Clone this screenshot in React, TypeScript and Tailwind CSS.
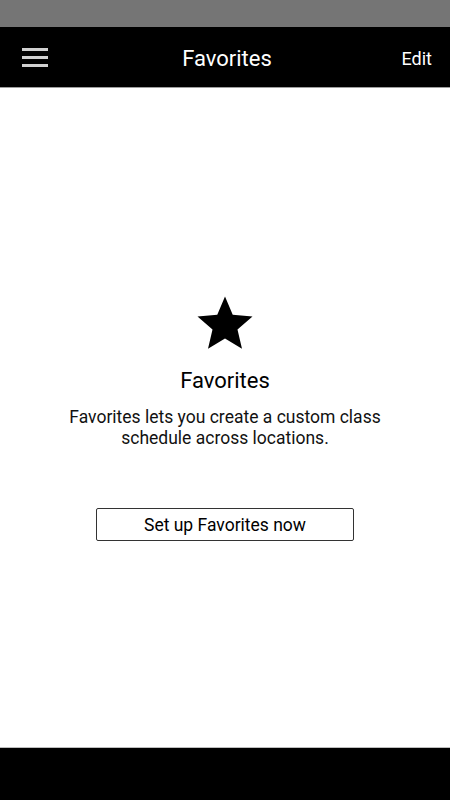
import React from "react";

const App = () => {
  return (
    <div className="flex h-[800px] w-[450px] flex-col bg-white font-['Roboto',sans-serif]">
      <div className="h-[27px] bg-[#757575]"></div>
      <header className="flex h-[61px] items-center justify-between border-b border-[#9e9e9e] bg-black pl-[22px] pr-[18px] pt-[3px] text-white">
        <button className="flex w-[34px] flex-col gap-[5px] pb-[3px]">
          <span className="block h-[3px] w-[26px] bg-[#d0d0d0]"></span>
          <span className="block h-[3px] w-[26px] bg-[#d0d0d0]"></span>
          <span className="block h-[3px] w-[26px] bg-[#d0d0d0]"></span>
        </button>
        <h1 className="text-[22px]">Favorites</h1>
        <span className="w-[34px] text-right text-[18px]">Edit</span>
      </header>
      <main className="flex flex-1 flex-col items-center pt-[203px]">
        <svg width="66" height="66" viewBox="0 0 24 24" fill="black">
          <path d="M12 17.27L18.18 21l-1.64-7.03L22 9.24l-7.19-.61L12 2 9.19 8.63 2 9.24l5.46 4.73L5.82 21z" />
        </svg>
        <h2 className="mt-[10px] text-[22px] leading-[28px] text-black">Favorites</h2>
        <p className="mt-[12px] w-[360px] text-center text-[17.5px] leading-[21px] text-[#111]">
          Favorites lets you create a custom class schedule across locations.
        </p>
        <button className="mt-[59px] h-[33px] w-[258px] rounded-[2px] border border-[#333] pt-[1px] text-[17.5px] text-black">
          Set up Favorites now
        </button>
      </main>
      <div className="h-[53px] border-t border-[#bdbdbd] bg-black"></div>
    </div>
  );
};

export default App;
